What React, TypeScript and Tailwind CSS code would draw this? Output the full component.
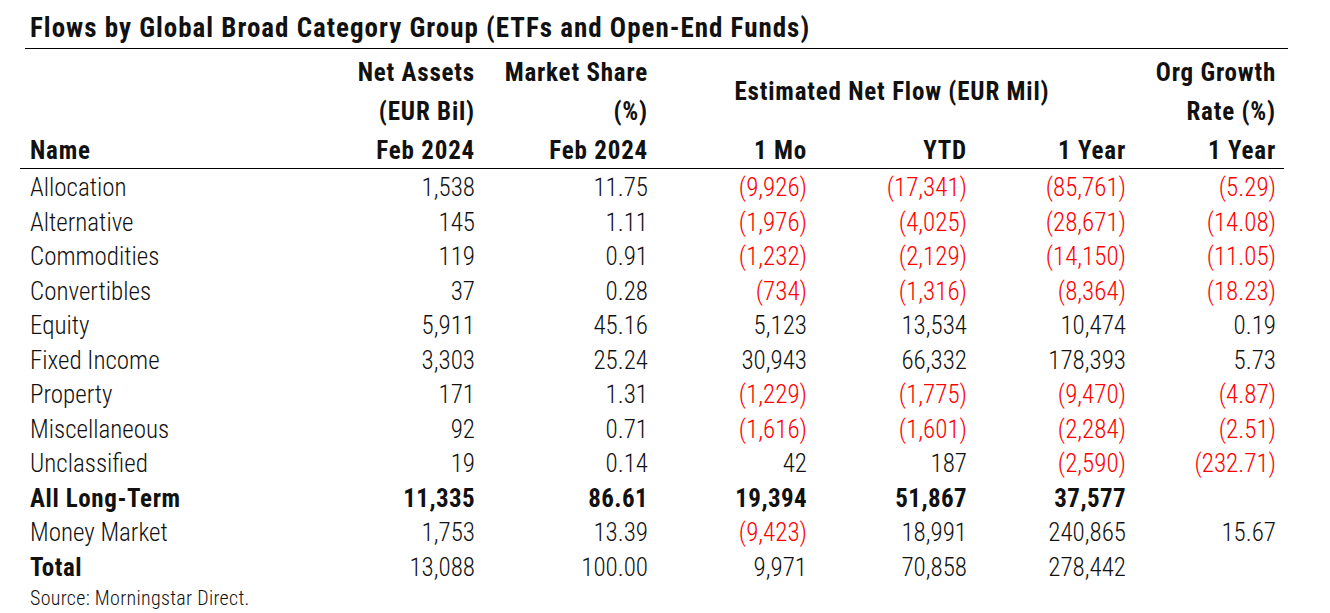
import React from "react";

type Row = {
  name: string;
  bold?: boolean;
  boldAll?: boolean;
  vals: string[];
};

const rows: Row[] = [
  { name: "Allocation", vals: ["1,538", "11.75", "(9,926)", "(17,341)", "(85,761)", "(5.29)"] },
  { name: "Alternative", vals: ["145", "1.11", "(1,976)", "(4,025)", "(28,671)", "(14.08)"] },
  { name: "Commodities", vals: ["119", "0.91", "(1,232)", "(2,129)", "(14,150)", "(11.05)"] },
  { name: "Convertibles", vals: ["37", "0.28", "(734)", "(1,316)", "(8,364)", "(18.23)"] },
  { name: "Equity", vals: ["5,911", "45.16", "5,123", "13,534", "10,474", "0.19"] },
  { name: "Fixed Income", vals: ["3,303", "25.24", "30,943", "66,332", "178,393", "5.73"] },
  { name: "Property", vals: ["171", "1.31", "(1,229)", "(1,775)", "(9,470)", "(4.87)"] },
  { name: "Miscellaneous", vals: ["92", "0.71", "(1,616)", "(1,601)", "(2,284)", "(2.51)"] },
  { name: "Unclassified", vals: ["19", "0.14", "42", "187", "(2,590)", "(232.71)"] },
  { name: "All Long-Term", bold: true, boldAll: true, vals: ["11,335", "86.61", "19,394", "51,867", "37,577", ""] },
  { name: "Money Market", vals: ["1,753", "13.39", "(9,423)", "18,991", "240,865", "15.67"] },
  { name: "Total", bold: true, vals: ["13,088", "100.00", "9,971", "70,858", "278,442", ""] },
];

const GRID = "grid grid-cols-[270px_175px_173px_159px_160px_159px_150px]";

export default function App() {
  return (
    <div
      className="w-[1330px] h-[613px] bg-white text-[#111] overflow-hidden"
      style={{ fontFamily: "'Roboto Condensed', 'Liberation Sans', sans-serif" }}
    >
      <div className="pt-[13px] pl-[30px]">
        <h1 className="text-[27px] leading-[30px] font-bold tracking-[1px] whitespace-nowrap">
          Flows by Global Broad Category Group (ETFs and Open-End Funds)
        </h1>
      </div>
      <div className="mt-[5px] ml-[25px] w-[1263px] h-px bg-black" />
      <div
        className={`${GRID} pl-[30px] mt-[4px] h-[115px] text-[25px] leading-[40px] font-bold tracking-[0.8px] grid-rows-[39px_39px_37px] whitespace-nowrap`}
      >
        <div className="row-start-3 col-start-1">Name</div>
        <div className="row-start-1 col-start-2 text-right">Net Assets</div>
        <div className="row-start-2 col-start-2 text-right">(EUR Bil)</div>
        <div className="row-start-3 col-start-2 text-right">Feb 2024</div>
        <div className="row-start-1 col-start-3 text-right">Market Share</div>
        <div className="row-start-2 col-start-3 text-right">(%)</div>
        <div className="row-start-3 col-start-3 text-right">Feb 2024</div>
        <div className="row-start-1 row-span-2 col-start-4 col-span-3 flex items-center justify-center pl-[10px]">
          Estimated Net Flow (EUR Mil)
        </div>
        <div className="row-start-3 col-start-4 text-right">1 Mo</div>
        <div className="row-start-3 col-start-5 text-right">YTD</div>
        <div className="row-start-3 col-start-6 text-right">1 Year</div>
        <div className="row-start-1 col-start-7 text-right">Org Growth</div>
        <div className="row-start-2 col-start-7 text-right">Rate (%)</div>
        <div className="row-start-3 col-start-7 text-right">1 Year</div>
      </div>
      <div className="ml-[20px] w-[1264px] h-px bg-black" />
      <div className="mt-[2px] text-[25px] leading-[34.5px] whitespace-nowrap">
        {rows.map((r) => (
          <div key={r.name} className={`${GRID} pl-[30px] h-[34.5px]`}>
            <div className={r.bold ? "font-bold tracking-[0.6px]" : "font-light"}>{r.name}</div>
            {r.vals.map((v, i) => (
              <div
                key={i}
                className={`text-right ${r.boldAll ? "font-bold tracking-[0.4px]" : "font-light"} ${
                  v.startsWith("(") ? "text-[#ff0000]" : ""
                }`}
              >
                {v}
              </div>
            ))}
          </div>
        ))}
      </div>
      <div className="pl-[30px] mt-[-2px] text-[20px] leading-[30px] font-light tracking-[0.3px] whitespace-nowrap">
        Source: Morningstar Direct.
      </div>
    </div>
  );
}
